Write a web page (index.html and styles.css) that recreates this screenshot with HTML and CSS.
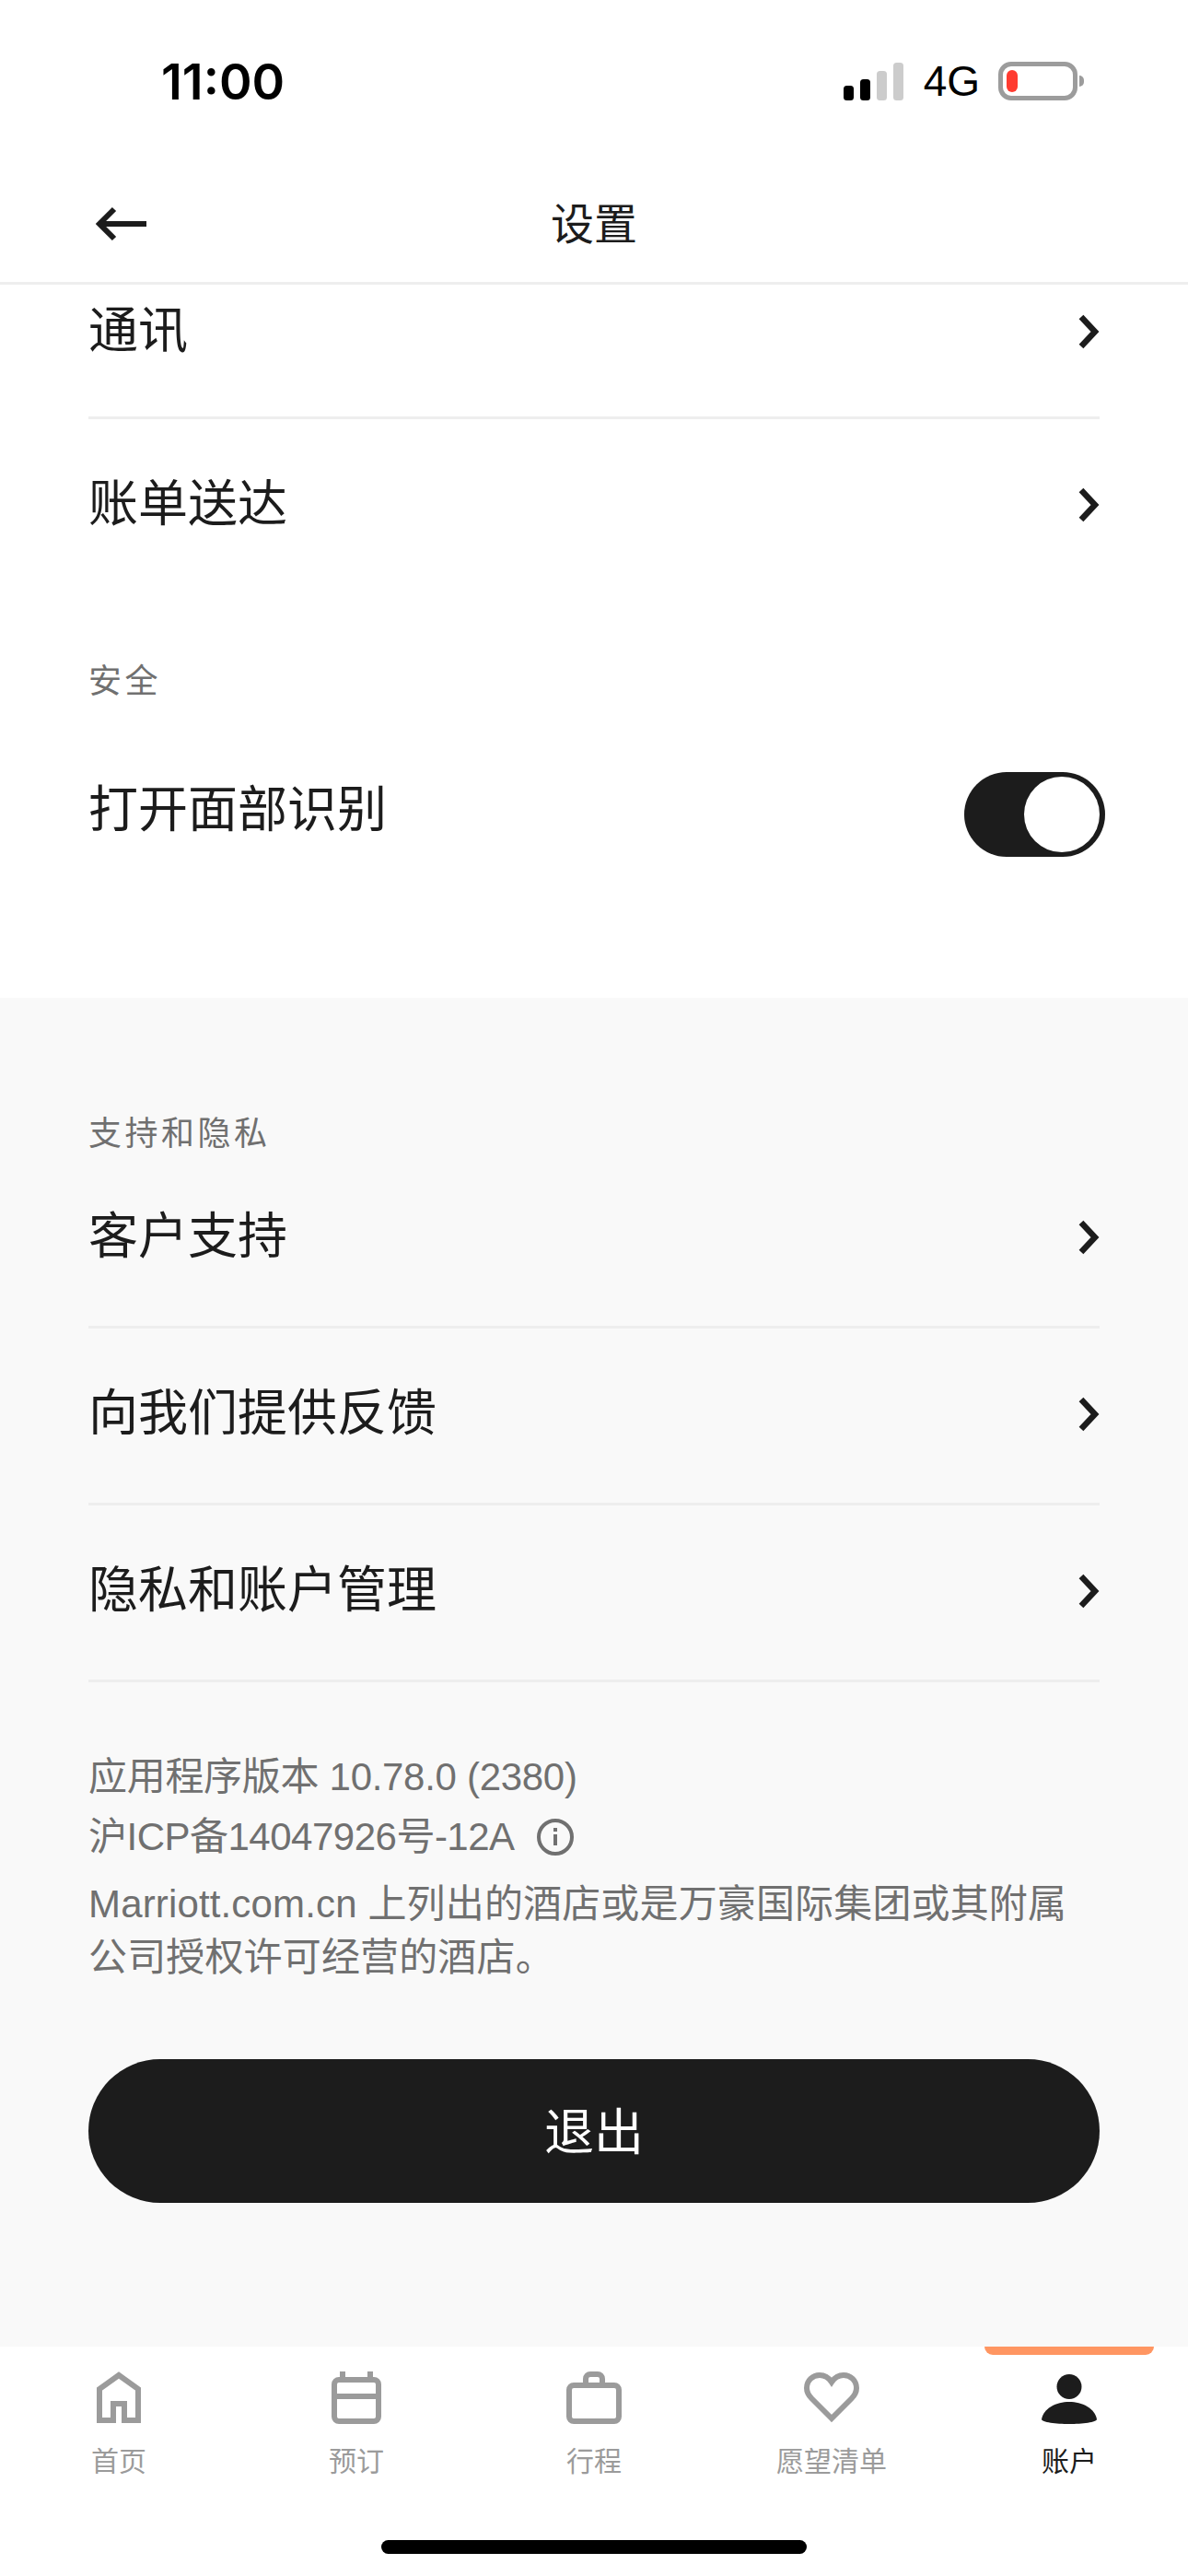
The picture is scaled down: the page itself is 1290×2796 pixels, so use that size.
FILE: index.html
```html
<!DOCTYPE html>
<html lang="zh-CN">
<head>
    <meta charset="UTF-8">
    <meta name="viewport" content="width=device-width, initial-scale=1.0">
    <title>设置</title>
    <link rel="stylesheet" href="styles.css">
</head>
<body>
    <div class="status-bar">
        <span class="time">11:00</span>
        <div class="status-right">
            <div class="signal">
                <span class="bar bar-1"></span>
                <span class="bar bar-2"></span>
                <span class="bar bar-3 off"></span>
                <span class="bar bar-4 off"></span>
            </div>
            <span class="network">4G</span>
            <div class="battery">
                <div class="battery-body"><span class="battery-level"></span></div>
                <span class="battery-nub"></span>
            </div>
        </div>
    </div>

    <header class="nav">
        <svg class="back" viewBox="0 0 60 40" width="60" height="40" fill="none" stroke="#1c1c1c" stroke-width="6">
            <path d="M57 20H6M22 4L6 20l16 16"/>
        </svg>
        <h1 class="nav-title">设置</h1>
    </header>

    <section class="group-white">
        <div class="row row-cut">
            <span class="row-text">通讯</span>
            <svg class="chevron" viewBox="0 0 24 38" width="24" height="38" fill="none" stroke="#1c1c1c" stroke-width="6.5"><path d="M4 3l15 16L4 35"/></svg>
        </div>
        <div class="row row-plain">
            <span class="row-text">账单送达</span>
            <svg class="chevron" viewBox="0 0 24 38" width="24" height="38" fill="none" stroke="#1c1c1c" stroke-width="6.5"><path d="M4 3l15 16L4 35"/></svg>
        </div>
        <p class="section-label label-security">安全</p>
        <div class="row-toggle">
            <span class="row-text">打开面部识别</span>
            <div class="toggle"><span class="knob"></span></div>
        </div>
    </section>

    <section class="group-grey">
        <p class="section-label label-support">支持和隐私</p>
        <div class="row">
            <span class="row-text">客户支持</span>
            <svg class="chevron" viewBox="0 0 24 38" width="24" height="38" fill="none" stroke="#1c1c1c" stroke-width="6.5"><path d="M4 3l15 16L4 35"/></svg>
        </div>
        <div class="row">
            <span class="row-text">向我们提供反馈</span>
            <svg class="chevron" viewBox="0 0 24 38" width="24" height="38" fill="none" stroke="#1c1c1c" stroke-width="6.5"><path d="M4 3l15 16L4 35"/></svg>
        </div>
        <div class="row">
            <span class="row-text">隐私和账户管理</span>
            <svg class="chevron" viewBox="0 0 24 38" width="24" height="38" fill="none" stroke="#1c1c1c" stroke-width="6.5"><path d="M4 3l15 16L4 35"/></svg>
        </div>

        <div class="legal">
            <p class="legal-line legal-version">应用程序版本 10.78.0 (2380)</p>
            <p class="legal-line legal-icp">
                <span>沪ICP备14047926号-12A</span>
                <svg viewBox="0 0 40 40" width="40" height="40" fill="none" stroke="#707070" stroke-width="4">
                    <circle cx="20" cy="20" r="18"/>
                    <path d="M20 17v12M20 10v4"/>
                </svg>
            </p>
            <p class="legal-text">Marriott.com.cn 上列出的酒店或是万豪国际集团或其附属<br>公司授权许可经营的酒店。</p>
        </div>

        <button class="logout">退出</button>
    </section>

    <nav class="tabbar">
        <div class="tabs">
            <div class="tab">
                <svg viewBox="0 0 48 57" width="48" height="57" fill="none" stroke="#9b9b9b" stroke-width="6"><path d="M18 53H3V19L24 4l21 15v34H30V35H18z"/></svg>
                <span>首页</span>
            </div>
            <div class="tab">
                <svg viewBox="0 0 54 57" width="54" height="57" fill="none" stroke="#9b9b9b" stroke-width="6"><rect x="3" y="9" width="48" height="45" rx="5"/><path d="M3 27h48M12 0v9M42 0v9"/></svg>
                <span>预订</span>
            </div>
            <div class="tab">
                <svg viewBox="0 0 60 57" width="60" height="57" fill="none" stroke="#9b9b9b" stroke-width="6"><rect x="3" y="15" width="54" height="39" rx="5"/><path d="M21 15V8a5 5 0 0 1 5-5h8a5 5 0 0 1 5 5v7"/></svg>
                <span>行程</span>
            </div>
            <div class="tab">
                <svg viewBox="0 0 60 57" width="60" height="57" fill="none" stroke="#9b9b9b" stroke-width="6"><path d="M30 51L8.500 29.500C4.500 25.500 3 22 3 18 3 9.700 9.500 4 17 4c5 0 10 3 13 7.500C33 7 38 4 43 4c7.500 0 14 5.700 14 14 0 4-1.500 7.500-5.500 11.500z"/></svg>
                <span>愿望清单</span>
            </div>
            <div class="tab tab-active">
                <svg viewBox="0 0 60 57" width="60" height="57" fill="#1c1c1c"><circle cx="30" cy="16.500" r="13.500"/><path d="M0 52c2-12 16-19 30-19s28 7 30 19c0 3-16 5-30 5S0 55 0 52z"/></svg>
                <span>账户</span>
            </div>
        </div>
        <div class="home-bar"></div>
    </nav>
</body>
</html>
```

FILE: styles.css
```css
* {
    box-sizing: border-box;
}
html, body {
    margin: 0;
    padding: 0;
}
body {
    width: 1290px;
    height: 2796px;
    overflow: hidden;
    background-color: #fff;
    color: #1c1c1c;
    font-family: "Liberation Sans", "Noto Sans CJK SC", sans-serif;
    display: flex;
    flex-direction: column;
}
p, h1 {
    margin: 0;
    font-weight: 400;
}

/* status bar */
.status-bar {
    height: 178px;
    padding: 0 113px 2px 175px;
    display: flex;
    justify-content: space-between;
    align-items: center;
    color: #000;
}
.time {
    font-family: Inter, sans-serif;
    font-size: 54px;
    font-weight: 600;
}
.status-right {
    display: flex;
    align-items: center;
}
.signal {
    display: flex;
    align-items: flex-end;
    gap: 7px;
    height: 41px;
    margin-right: 22px;
}
.bar {
    width: 11px;
    border-radius: 3.500px;
    background-color: #000;
}
.bar.off {
    background-color: #ccc;
}
.bar-1 { height: 16px; }
.bar-2 { height: 23px; }
.bar-3 { height: 32px; }
.bar-4 { height: 41px; }
.network {
    font-size: 46px;
    margin-right: 20px;
}
.battery {
    display: flex;
    align-items: center;
}
.battery-body {
    width: 86px;
    height: 42px;
    padding: 4px;
    border: 5px solid #9c9c9c;
    border-radius: 14px;
}
.battery-level {
    display: block;
    width: 12px;
    height: 24px;
    border-radius: 6px;
    background-color: #ff3b30;
}
.battery-nub {
    width: 5px;
    height: 12px;
    margin-left: 2px;
    border-radius: 0 6px 6px 0;
    background-color: #9c9c9c;
}

/* nav */
.nav {
    height: 131px;
    position: relative;
    display: flex;
    align-items: center;
    justify-content: center;
    border-bottom: 3px solid #eee;
}
.back {
    position: absolute;
    left: 102px;
    top: 45px;
}
.nav-title {
    font-size: 47px;
    padding-bottom: 6px;
}

/* rows */
.group-white {
    height: 774px;
    padding: 0 96px;
}
.group-grey {
    height: 1464px;
    padding: 0 96px;
    background-color: #f9f9f9;
}
.row {
    height: 192px;
    display: flex;
    align-items: center;
    justify-content: space-between;
    border-bottom: 3px solid #eee;
    font-size: 54px;
}
.row-text {
    padding-bottom: 14px;
}
.chevron {
    margin-bottom: 3px;
}
.row-cut {
    height: 146px;
    padding-bottom: 38px;
}
.row-plain {
    height: 188px;
    border-bottom: 0;
}
.section-label {
    font-size: 36px;
    letter-spacing: 3.500px;
    color: #707070;
    line-height: 44px;
}
.label-security {
    margin-top: 75px;
}
.row-toggle {
    margin-top: 76px;
    height: 92px;
    display: flex;
    align-items: center;
    justify-content: space-between;
    font-size: 54px;
}
.row-toggle .row-text {
    padding-bottom: 20px;
}
.toggle {
    width: 153px;
    height: 92px;
    margin-right: -6px;
    padding: 5px 6px;
    display: flex;
    justify-content: flex-end;
    border-radius: 46px;
    background-color: #1c1c1c;
}
.knob {
    width: 82px;
    height: 82px;
    border-radius: 50%;
    background-color: #fff;
}

.label-support {
    margin-top: 126px;
    margin-bottom: -3px;
}

/* version and legal text */
.legal {
    margin-top: 70px;
    color: #707070;
    font-size: 42px;
}
.legal-line {
    line-height: 65px;
}
.legal-version {
    letter-spacing: -0.300px;
}
.legal-icp {
    display: flex;
    align-items: center;
    gap: 24px;
    letter-spacing: -0.500px;
}
.legal-text {
    margin-top: 12px;
    line-height: 58px;
    letter-spacing: 0.150px;
}

.logout {
    display: block;
    width: 100%;
    height: 156px;
    margin-top: 81px;
    padding: 0 0 6px;
    border: 0;
    border-radius: 78px;
    background-color: #1c1c1c;
    color: #fff;
    font-family: inherit;
    font-size: 54px;
}

/* tab bar */
.tabbar {
    flex: 1;
}
.tabs {
    display: flex;
}
.tab {
    width: 258px;
    display: flex;
    flex-direction: column;
    align-items: center;
    font-size: 30px;
    line-height: 40px;
    color: #9b9b9b;
}
.tab::before {
    content: "";
    width: 184px;
    height: 9px;
    margin-bottom: 18px;
    border-radius: 0 0 10px 10px;
}
.tab svg {
    margin-bottom: 21px;
}
.tab-active {
    color: #1c1c1c;
}
.tab-active::before {
    background-color: #ff9662;
}
.home-bar {
    width: 462px;
    height: 15px;
    margin: 65px auto 0;
    border-radius: 8px;
    background-color: #000;
}
```
